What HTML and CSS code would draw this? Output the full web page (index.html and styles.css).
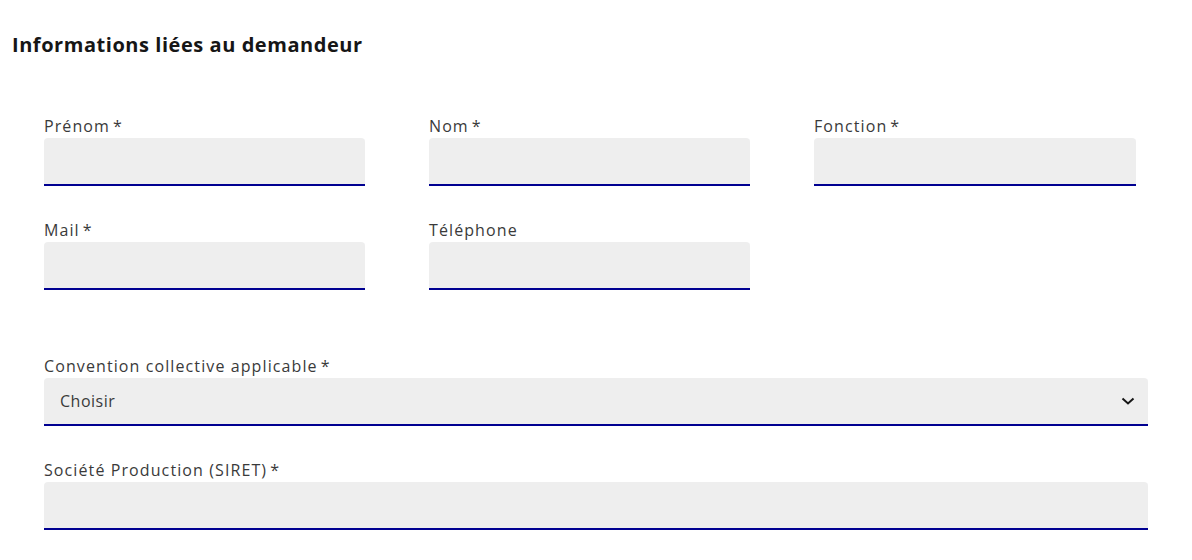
FILE: index.html
```html
<!DOCTYPE html>
<html lang="fr">
<head>
<meta charset="utf-8">
<link rel="stylesheet" href="styles.css">
</head>
<body>
<div class="page">
  <h2 class="title">Informations liées au demandeur</h2>
  <div class="fields">
    <div class="grid">
      <div class="group">
        <label class="label">Prénom<span class="req">*</span></label>
        <div class="input"></div>
      </div>
      <div class="group">
        <label class="label">Nom<span class="req">*</span></label>
        <div class="input"></div>
      </div>
      <div class="group">
        <label class="label">Fonction<span class="req">*</span></label>
        <div class="input"></div>
      </div>
      <div class="group">
        <label class="label">Mail<span class="req">*</span></label>
        <div class="input"></div>
      </div>
      <div class="group">
        <label class="label">Téléphone</label>
        <div class="input"></div>
      </div>
    </div>
    <div class="group wide first-wide">
      <label class="label">Convention collective applicable<span class="req">*</span></label>
      <div class="input select">
        <span class="value">Choisir</span>
        <svg class="chev" width="16" height="16" viewBox="0 0 16 16"><path d="M2.5 5.5 8 10.5l5.5-5" fill="none" stroke="#161616" stroke-width="2"/></svg>
      </div>
    </div>
    <div class="group wide">
      <label class="label">Société Production (SIRET)<span class="req">*</span></label>
      <div class="input"></div>
    </div>
  </div>
</div>
</body>
</html>
```
FILE: styles.css
```css
html, body {
  margin: 0;
  padding: 0;
  background: #ffffff;
}
body {
  font-family: "Open Sans", "Liberation Sans", sans-serif;
  color: #161616;
}
.page {
  padding: 31px 0 0 12px;
}
.title {
  margin: 0;
  font-size: 20px;
  line-height: 28px;
  font-weight: 700;
  letter-spacing: 0.55px;
  color: #161616;
}
.fields {
  padding: 55px 0 0 32px;
  width: 1104px;
}
.grid {
  display: grid;
  grid-template-columns: 321px 321px 322px;
  column-gap: 64px;
  row-gap: 32px;
}
.group {
  display: flex;
  flex-direction: column;
}
.label {
  font-size: 16px;
  line-height: 24px;
  letter-spacing: 1.1px;
  color: #3a3a3a;
}
.req {
  margin-left: 3px;
}
.input {
  height: 48px;
  box-sizing: border-box;
  background: #eeeeee;
  border-radius: 4px 4px 0 0;
  box-shadow: inset 0 -2px 0 0 #000091;
}
.first-wide {
  margin-top: 64px;
}
.wide + .wide {
  margin-top: 32px;
}
.select {
  display: flex;
  align-items: center;
  justify-content: space-between;
  padding: 0 12px 2px 16px;
}
.value {
  font-size: 16px;
  letter-spacing: 0.5px;
  color: #3a3a3a;
}
.chev {
  display: block;
}
```
